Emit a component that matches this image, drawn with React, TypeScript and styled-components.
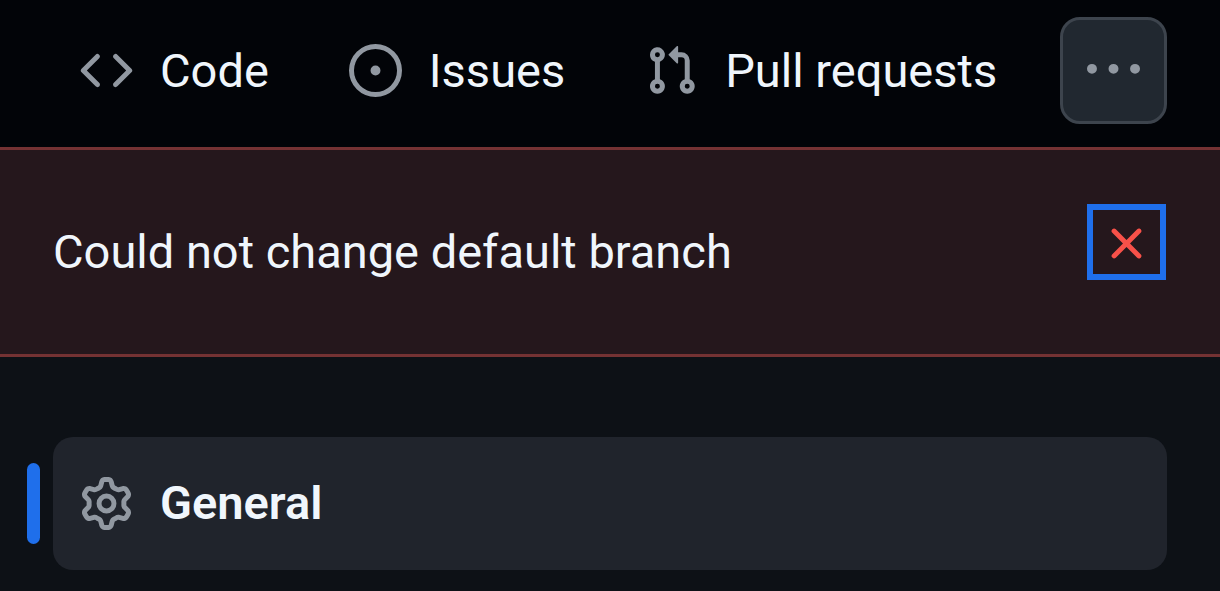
import React from "react";
import styled, { createGlobalStyle } from "styled-components";

const GlobalStyle = createGlobalStyle`
  *, *::before, *::after { box-sizing: border-box; }
  body {
    margin: 0;
    background: #0d1116;
    color: #f0f6fc;
    font-family: Roboto, "Liberation Sans", sans-serif;
    font-size: 47px;
    line-height: 70px;
    overflow-x: hidden;
  }
`;

const icons = {
  code: "m11.28 3.22 4.25 4.25a.75.75 0 0 1 0 1.06l-4.25 4.25a.749.749 0 0 1-1.275-.326.749.749 0 0 1 .215-.734L13.94 8l-3.72-3.72a.749.749 0 0 1 .326-1.275.749.749 0 0 1 .734.215Zm-6.56 0a.751.751 0 0 1 1.042.018.751.751 0 0 1 .018 1.042L2.06 8l3.72 3.72a.749.749 0 0 1-.326 1.275.749.749 0 0 1-.734-.215L.47 8.53a.75.75 0 0 1 0-1.06Z",
  issue:
    "M8 9.5a1.5 1.5 0 1 0 0-3 1.5 1.5 0 0 0 0 3ZM8 0a8 8 0 1 1 0 16A8 8 0 0 1 8 0ZM1.5 8a6.5 6.5 0 1 0 13 0 6.5 6.5 0 0 0-13 0Z",
  pull: "M1.5 3.25a2.25 2.25 0 1 1 3 2.122v5.256a2.251 2.251 0 1 1-1.5 0V5.372A2.25 2.25 0 0 1 1.5 3.25Zm5.677-.177L9.573.677A.25.25 0 0 1 10 .854V2.5h1A2.5 2.5 0 0 1 13.5 5v5.628a2.251 2.251 0 1 1-1.5 0V5a1 1 0 0 0-1-1h-1v1.646a.25.25 0 0 1-.427.177L7.177 3.427a.25.25 0 0 1 0-.354ZM3.75 2.5a.75.75 0 1 0 0 1.5.75.75 0 0 0 0-1.5Zm0 9.5a.75.75 0 1 0 0 1.5.75.75 0 0 0 0-1.5Zm8.25.75a.75.75 0 1 0 1.5 0 .75.75 0 0 0-1.5 0Z",
  more: "M8 9a1.5 1.5 0 1 0 0-3 1.5 1.5 0 0 0 0 3ZM1.5 9a1.5 1.5 0 1 0 0-3 1.5 1.5 0 0 0 0 3Zm13 0a1.5 1.5 0 1 0 0-3 1.5 1.5 0 0 0 0 3Z",
  close:
    "M3.72 3.72a.75.75 0 0 1 1.06 0L8 6.94l3.22-3.22a.749.749 0 0 1 1.275.326.749.749 0 0 1-.215.734L9.06 8l3.22 3.22a.749.749 0 0 1-.326 1.275.749.749 0 0 1-.734-.215L8 9.06l-3.22 3.22a.751.751 0 0 1-1.042-.018.751.751 0 0 1-.018-1.042L6.94 8 3.72 4.78a.75.75 0 0 1 0-1.06Z",
  gear: "M8 0a8.2 8.2 0 0 1 .701.031C9.444.095 9.99.645 10.16 1.29l.288 1.107c.018.066.079.158.212.224.231.114.454.243.668.386.123.082.233.09.299.071l1.103-.303c.644-.176 1.392.021 1.82.63.27.385.506.792.704 1.218.315.675.111 1.422-.364 1.891l-.814.806c-.049.048-.098.147-.088.294.016.257.016.515 0 .772-.01.147.038.246.088.294l.814.806c.475.469.679 1.216.364 1.891a7.977 7.977 0 0 1-.704 1.217c-.428.61-1.176.807-1.82.63l-1.102-.302c-.067-.019-.177-.011-.3.071a5.909 5.909 0 0 1-.668.386c-.133.066-.194.158-.211.224l-.29 1.106c-.168.646-.715 1.196-1.458 1.26a8.006 8.006 0 0 1-1.402 0c-.743-.064-1.289-.614-1.458-1.26l-.289-1.106c-.018-.066-.079-.158-.212-.224a5.738 5.738 0 0 1-.668-.386c-.123-.082-.233-.09-.299-.071l-1.103.303c-.644.176-1.392-.021-1.82-.63a8.12 8.12 0 0 1-.704-1.218c-.315-.675-.111-1.422.363-1.891l.815-.806c.05-.048.098-.147.088-.294a6.214 6.214 0 0 1 0-.772c.01-.147-.038-.246-.088-.294l-.815-.806C.635 6.045.431 5.298.746 4.623a7.92 7.92 0 0 1 .704-1.217c.428-.61 1.176-.807 1.82-.63l1.102.302c.067.019.177.011.3-.071.214-.143.437-.272.668-.386.133-.066.194-.158.211-.224l.29-1.106C6.009.645 6.556.095 7.299.03 7.53.01 7.764 0 8 0Zm-.571 1.525c-.036.003-.108.036-.137.146l-.289 1.105c-.147.561-.549.967-.998 1.189-.173.086-.34.183-.5.29-.417.278-.97.423-1.529.27l-1.103-.303c-.109-.03-.175.016-.195.045-.22.312-.412.644-.573.99-.014.031-.021.11.059.19l.815.806c.411.406.562.957.53 1.456a4.709 4.709 0 0 0 0 .582c.032.499-.119 1.05-.53 1.456l-.815.806c-.081.08-.073.159-.059.19.162.346.353.677.573.989.02.03.085.076.195.046l1.102-.303c.56-.153 1.113-.008 1.53.27.161.107.328.204.501.29.447.222.85.629.997 1.189l.289 1.105c.029.109.101.143.137.146a6.6 6.6 0 0 0 1.142 0c.036-.003.108-.036.137-.146l.289-1.105c.147-.561.549-.967.998-1.189.173-.086.34-.183.5-.29.417-.278.97-.423 1.529-.27l1.103.303c.109.029.175-.016.195-.045.22-.313.411-.644.573-.99.014-.031.021-.11-.059-.19l-.815-.806c-.411-.406-.562-.957-.53-1.456a4.709 4.709 0 0 0 0-.582c-.032-.499.119-1.05.53-1.456l.815-.806c.081-.08.073-.159.059-.19a6.464 6.464 0 0 0-.573-.989c-.02-.03-.085-.076-.195-.046l-1.102.303c-.56.153-1.113.008-1.53-.27a4.44 4.44 0 0 0-.501-.29c-.447-.222-.85-.629-.997-1.189l-.289-1.105c-.029-.11-.101-.143-.137-.146a6.6 6.6 0 0 0-1.142 0ZM11 8a3 3 0 1 1-6 0 3 3 0 0 1 6 0ZM9.5 8a1.5 1.5 0 1 0-3.001.001A1.5 1.5 0 0 0 9.5 8Z",
};

const Svg = styled.svg`
  display: block;
  flex: none;
  width: 53px;
  height: 53px;
  fill: currentColor;
`;

const Icon = ({ name }: { name: keyof typeof icons }) => (
  <Svg viewBox="0 0 16 16" aria-hidden="true">
    <path d={icons[name]} />
  </Svg>
);

const Header = styled.header`
  display: flex;
  align-items: center;
  justify-content: space-between;
  padding: 17px 53px 23px 80px;
  background: #020408;
`;

const Tabs = styled.nav`
  display: flex;
  gap: 80px;
`;

const TabLink = styled.a`
  display: flex;
  align-items: center;
  gap: 27px;
  color: #f0f6fc;
  text-decoration: none;
  white-space: nowrap;

  ${Svg} { color: #9198a1; }
`;

const MoreButton = styled.button`
  display: grid;
  place-items: center;
  flex: none;
  width: 107px;
  height: 107px;
  padding: 0;
  border: 3px solid #3d444d;
  border-radius: 20px;
  background: #212830;
  color: #9198a1;
`;

const Flash = styled.div`
  display: flex;
  align-items: flex-start;
  justify-content: space-between;
  padding: 54px 54px 67px 53px;
  border: solid #743233;
  border-width: 3px 0;
  background: #25171c;
`;

const Message = styled.p`
  margin: 13px 0 0;
`;

const CloseButton = styled.button`
  display: grid;
  place-items: center;
  flex: none;
  width: 79px;
  height: 76px;
  padding: 3px 1px 0 0;
  border: 6px solid #1f6feb;
  background: transparent;
  color: #f85149;
`;

const Sidebar = styled.nav`
  display: flex;
  align-items: center;
  gap: 13px;
  padding: 80px 53px 20px 27px;
`;

const Marker = styled.span`
  flex: none;
  width: 13px;
  height: 81px;
  border-radius: 7px;
  background: #1f6feb;
`;

const SideLink = styled(TabLink)`
  flex: 1;
  padding: 31px 27px 32px;
  border-radius: 20px;
  background: #20242c;
  font-weight: 600;
`;

export default function App() {
  return (
    <>
      <GlobalStyle />
      <Header>
        <Tabs aria-label="Repository">
          <TabLink href="#code"><Icon name="code" />Code</TabLink>
          <TabLink href="#issues"><Icon name="issue" />Issues</TabLink>
          <TabLink href="#pulls"><Icon name="pull" />Pull requests</TabLink>
        </Tabs>
        <MoreButton type="button" aria-label="More"><Icon name="more" /></MoreButton>
      </Header>
      <main>
        <Flash role="alert">
          <Message>Could not change default branch</Message>
          <CloseButton type="button" aria-label="Dismiss"><Icon name="close" /></CloseButton>
        </Flash>
        <Sidebar aria-label="Settings">
          <Marker />
          <SideLink href="#general" aria-current="page"><Icon name="gear" />General</SideLink>
        </Sidebar>
      </main>
    </>
  );
}
